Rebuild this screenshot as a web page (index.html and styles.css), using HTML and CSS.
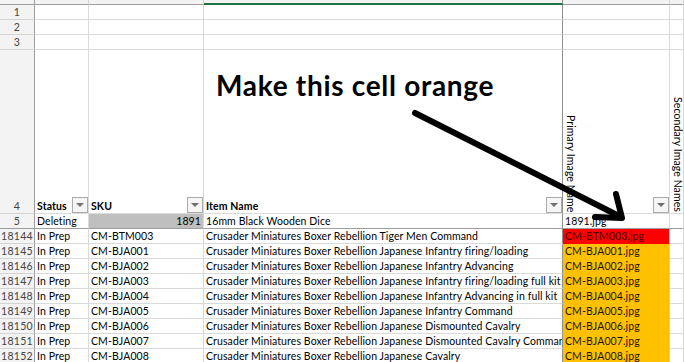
FILE: index.html
```html
<!DOCTYPE html>
<html lang="en">
<head>
    <meta charset="UTF-8">
    <title>Image Names - Sheet</title>
    <link rel="stylesheet" href="styles.css">
</head>
<body>
    <div class="sheet">
        <!-- column headers (scrolled so only their bottom edge shows) -->
        <div class="row colheads">
            <div class="hd corner"></div>
            <div class="hd"></div>
            <div class="hd"></div>
            <div class="hd active"></div>
            <div class="hd"></div>
            <div class="hd"></div>
        </div>

        <div class="row">
            <div class="num">1</div><div class="cell"></div><div class="cell"></div><div class="cell frozen"></div><div class="cell"></div><div class="cell"></div>
        </div>
        <div class="row">
            <div class="num">2</div><div class="cell"></div><div class="cell"></div><div class="cell frozen"></div><div class="cell"></div><div class="cell"></div>
        </div>
        <div class="row">
            <div class="num">3</div><div class="cell"></div><div class="cell"></div><div class="cell frozen"></div><div class="cell"></div><div class="cell"></div>
        </div>

        <!-- header row with filters -->
        <div class="row tall">
            <div class="num">4</div>
            <div class="cell head"><b>Status</b><span class="filter"></span></div>
            <div class="cell head"><b>SKU</b><span class="filter"></span></div>
            <div class="cell head frozen"><b>Item Name</b><span class="filter"></span></div>
            <div class="cell head"><span class="vtext">Primary Image Name</span><span class="filter"></span></div>
            <div class="cell head"><span class="vtext">Secondary Image Names</span></div>
        </div>

        <div class="row split">
            <div class="num">5</div>
            <div class="cell">Deleting</div>
            <div class="cell grey right">1891</div>
            <div class="cell frozen">16mm Black Wooden Dice</div>
            <div class="cell">1891.jpg</div>
            <div class="cell"></div>
        </div>

        <div class="row">
            <div class="num">18144</div><div class="cell">In Prep</div><div class="cell">CM-BTM003</div>
            <div class="cell frozen">Crusader Miniatures Boxer Rebellion Tiger Men Command</div>
            <div class="cell red">CM-BTM003.jpg</div><div class="cell"></div>
        </div>
        <div class="row">
            <div class="num">18145</div><div class="cell">In Prep</div><div class="cell">CM-BJA001</div>
            <div class="cell frozen">Crusader Miniatures Boxer Rebellion Japanese Infantry firing/loading</div>
            <div class="cell orange">CM-BJA001.jpg</div><div class="cell"></div>
        </div>
        <div class="row">
            <div class="num">18146</div><div class="cell">In Prep</div><div class="cell">CM-BJA002</div>
            <div class="cell frozen">Crusader Miniatures Boxer Rebellion Japanese Infantry Advancing</div>
            <div class="cell orange">CM-BJA002.jpg</div><div class="cell"></div>
        </div>
        <div class="row">
            <div class="num">18147</div><div class="cell">In Prep</div><div class="cell">CM-BJA003</div>
            <div class="cell frozen">Crusader Miniatures Boxer Rebellion Japanese Infantry firing/loading full kit</div>
            <div class="cell orange">CM-BJA003.jpg</div><div class="cell"></div>
        </div>
        <div class="row">
            <div class="num">18148</div><div class="cell">In Prep</div><div class="cell">CM-BJA004</div>
            <div class="cell frozen">Crusader Miniatures Boxer Rebellion Japanese Infantry Advancing in full kit</div>
            <div class="cell orange">CM-BJA004.jpg</div><div class="cell"></div>
        </div>
        <div class="row">
            <div class="num">18149</div><div class="cell">In Prep</div><div class="cell">CM-BJA005</div>
            <div class="cell frozen">Crusader Miniatures Boxer Rebellion Japanese Infantry Command</div>
            <div class="cell orange">CM-BJA005.jpg</div><div class="cell"></div>
        </div>
        <div class="row">
            <div class="num">18150</div><div class="cell">In Prep</div><div class="cell">CM-BJA006</div>
            <div class="cell frozen">Crusader Miniatures Boxer Rebellion Japanese Dismounted Cavalry</div>
            <div class="cell orange">CM-BJA006.jpg</div><div class="cell"></div>
        </div>
        <div class="row">
            <div class="num">18151</div><div class="cell">In Prep</div><div class="cell">CM-BJA007</div>
            <div class="cell frozen">Crusader Miniatures Boxer Rebellion Japanese Dismounted Cavalry Command</div>
            <div class="cell orange">CM-BJA007.jpg</div><div class="cell"></div>
        </div>
        <div class="row">
            <div class="num">18152</div><div class="cell">In Prep</div><div class="cell">CM-BJA008</div>
            <div class="cell frozen">Crusader Miniatures Boxer Rebellion Japanese Cavalry</div>
            <div class="cell orange">CM-BJA008.jpg</div><div class="cell"></div>
        </div>
    </div>

    <!-- annotation drawn over the sheet -->
    <div class="note">Make this cell orange</div>
    <svg class="arrow" width="684" height="362" viewBox="0 0 684 362">
        <path d="M415 113 L621 217" />
        <path d="M616 194 L622 218 L595 217" />
    </svg>
</body>
</html>
```

FILE: styles.css
```css
body {
    margin: 0;
    width: 684px;
    height: 362px;
    overflow: hidden;
    font-family: Lato, "Open Sans", sans-serif;
    font-size: 10.5px;
    letter-spacing: 0.1px;
    color: #000;
    background: #fff;
}
.sheet {
    width: 684px;
}
.row {
    display: grid;
    grid-template-columns: 35px 54px 115px 359px 107px 1fr;
    height: 15px;
}
.row.tall {
    height: 164px;
}
.colheads {
    height: 5px;
}
.hd {
    box-sizing: border-box;
    background: #f3f3f3;
    border-right: 1px solid #d4d4d4;
    border-bottom: 1px solid #9e9e9e;
}
.hd.active {
    border-bottom: 2px solid #217346;
    border-right-color: #8f8f8f;
}
.hd.corner {
    border-right-color: #9e9e9e;
}
.num {
    box-sizing: border-box;
    background: #f3f3f3;
    color: #444;
    text-align: center;
    line-height: 14px;
    letter-spacing: 0.3px;
    border-right: 1px solid #9e9e9e;
    border-bottom: 1px solid #d4d4d4;
}
.tall .num {
    display: flex;
    align-items: flex-end;
    justify-content: center;
}
.cell {
    box-sizing: border-box;
    padding-left: 2px;
    line-height: 14px;
    white-space: nowrap;
    overflow: hidden;
    border-right: 1px solid #dadada;
    border-bottom: 1px solid #dadada;
}
.cell.frozen {
    border-right-color: #8f8f8f;
}
.split .cell, .split .num {
    border-bottom-color: #9e9e9e;
}
.cell.head {
    display: flex;
    align-items: flex-end;
}
.cell.head b {
    font-weight: 700;
}
.filter {
    box-sizing: border-box;
    width: 16px;
    height: 16px;
    margin-left: auto;
    border: 1px solid #ababab;
    background: #f5f5f5;
    display: flex;
    align-items: center;
    justify-content: center;
}
.filter::after {
    content: "";
    border-left: 4px solid transparent;
    border-right: 4px solid transparent;
    border-top: 4px solid #707070;
}
.vtext {
    writing-mode: vertical-rl;
    line-height: 12px;
    padding-bottom: 1px;
}
.cell.grey {
    background: #bfbfbf;
}
.cell.right {
    text-align: right;
    padding-right: 2px;
}
.cell.red {
    background: #ff0000;
    color: #4a0000;
    border-bottom-color: #ff0000;
}
.cell.orange {
    background: #ffc000;
    color: #1a1400;
    border-bottom-color: #ffc000;
}
.note {
    position: absolute;
    left: 216px;
    top: 69px;
    font-family: Lato, sans-serif;
    font-weight: 700;
    font-size: 28px;
    letter-spacing: 0.7px;
    line-height: 32px;
    white-space: nowrap;
}
.arrow {
    position: absolute;
    left: 0;
    top: 0;
    pointer-events: none;
}
.arrow path {
    fill: none;
    stroke: #000;
    stroke-width: 6;
    stroke-linecap: round;
    stroke-linejoin: round;
}
```
